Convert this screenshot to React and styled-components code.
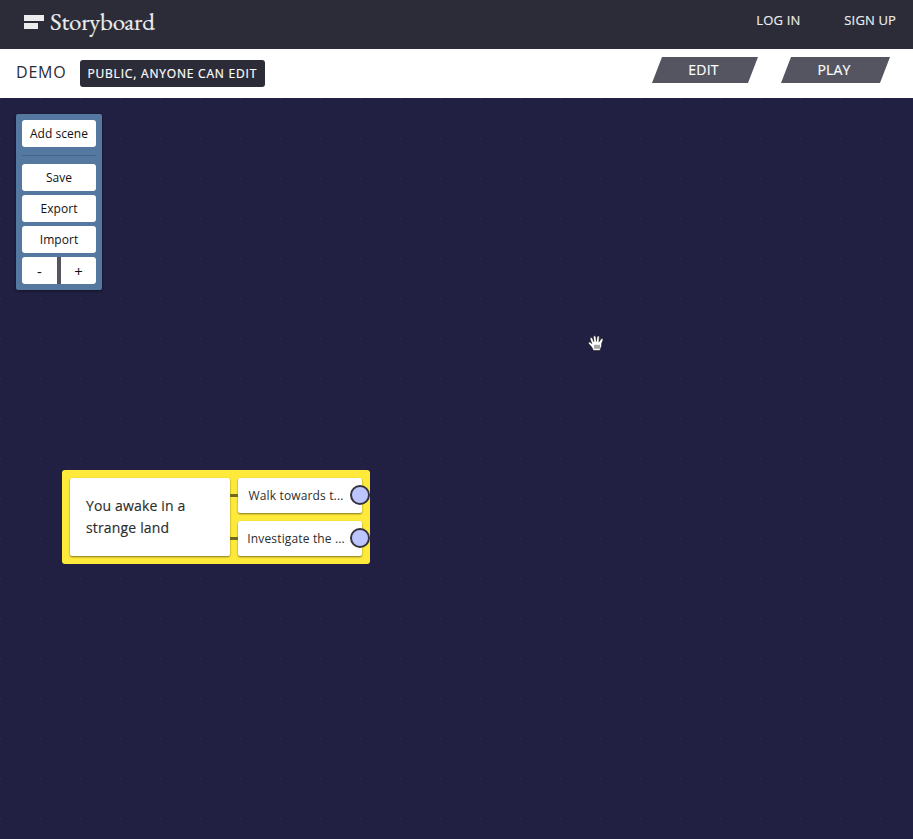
import React from "react";
import styled, { createGlobalStyle } from "styled-components";

const GlobalStyle = createGlobalStyle`
  * { box-sizing: border-box; }
  body { margin: 0; font-family: "Open Sans", "Noto Sans", sans-serif; background: #222042; }
  button { font-family: inherit; border: 0; padding: 0; margin: 0; }
`;

const Page = styled.div`
  display: flex;
  flex-direction: column;
  height: 839px;
  overflow: hidden;
`;

const TopBar = styled.header`
  display: flex;
  justify-content: space-between;
  height: 49px;
  padding: 0 17px 0 24px;
  background: #2b2c38;
  color: #ececec;
`;

const Brand = styled.a`
  display: flex;
  align-items: flex-start;
  gap: 6px;
`;

const BrandMark = styled.svg`
  display: block;
  margin-top: 15px;
`;

const BrandName = styled.span`
  margin-top: 7px;
  font: 25px/28px "EB Garamond", "Liberation Serif", serif;
  letter-spacing: -0.22px;
  -webkit-text-stroke: 0.15px currentColor;
`;

const AccountNav = styled.nav`
  display: flex;
  gap: 44px;
`;

const NavLink = styled.a`
  margin-top: 10px;
  font-size: 13px;
  line-height: 20px;
  letter-spacing: 0.14px;
  -webkit-text-stroke: 0.15px currentColor;
  white-space: nowrap;
`;

const StoryBar = styled.div`
  display: flex;
  height: 49px;
  padding: 0 23px 0 16px;
  background: #fff;
`;

const StoryTitle = styled.h1`
  width: 64px;
  margin: 12px 0 0;
  font-size: 16px;
  line-height: 22px;
  font-weight: 400;
  letter-spacing: 0.8px;
  color: #2b2c38;
`;

const AccessBadge = styled.span`
  width: 185px;
  height: 27px;
  margin-top: 11px;
  padding-left: 7.5px;
  border-radius: 3px;
  background: #2b2c38;
  color: #fff;
  font-size: 12px;
  line-height: 27px;
  letter-spacing: 0.8px;
  -webkit-text-stroke: 0.2px currentColor;
  white-space: nowrap;
`;

const ModeTabs = styled.div`
  display: flex;
  gap: 23px;
  margin: 8px 0 0 auto;
`;

const ModeTab = styled.button`
  width: ${(p) => p.$width}px;
  height: 26px;
  padding-right: 3px;
  background: #555561;
  clip-path: polygon(10px 0, 100% 0, calc(100% - 10px) 100%, 0 100%);
  color: #fff;
  font-size: 14px;
  line-height: 26px;
  letter-spacing: 0.2px;
  -webkit-text-stroke: 0.15px currentColor;
`;

const Canvas = styled.main`
  position: relative;
  flex: 1;
  background-color: #222042;
  background-image: radial-gradient(circle at 0.5px 0.5px, #33334f 0.8px, transparent 1px);
  background-size: 40px 40px;
`;

const ToolPanel = styled.aside`
  display: flex;
  flex-direction: column;
  gap: 4px;
  position: absolute;
  left: 16px;
  top: 16px;
  width: 86px;
  height: 176px;
  padding: 6px;
  border-radius: 2px;
  background: #5578a1;
  box-shadow: 0 1px 3px rgba(0, 0, 0, 0.5);
`;

const ToolButton = styled.button`
  flex: 0 0 27px;
  border-radius: 3px;
  background: #fff;
  color: #111;
  font-size: 12px;
  line-height: 27px;
  letter-spacing: 0.05px;
  white-space: nowrap;
`;

const Divider = styled.div`
  flex: 0 0 1px;
  margin: 4px 0;
  background: #456489;
`;

const ZoomGroup = styled.div`
  display: grid;
  grid-template-columns: 35px 35px;
  gap: 4px;
  height: 27px;
  border-radius: 3px;
  background: #555561;
  overflow: hidden;
`;

const ZoomButton = styled.button`
  background: #fff;
  color: #111;
  font-size: 15px;
  line-height: 28px;
`;

const SceneNode = styled.section`
  display: flex;
  gap: 8px;
  position: absolute;
  left: 62px;
  top: 372px;
  width: 308px;
  height: 94px;
  padding: 8px;
  border-radius: 3px;
  background: #ffea3b;
`;

const SceneText = styled.div`
  width: 160px;
  padding: 17px 16px;
  border-radius: 2px;
  background: #fff;
  box-shadow: 0 1px 2px rgba(0, 0, 0, 0.5);
  color: #2d2d2d;
  font-size: 14px;
  line-height: 22px;
  letter-spacing: 0.16px;
  -webkit-text-stroke: 0.15px currentColor;
`;

const ChoiceList = styled.div`
  display: flex;
  flex-direction: column;
  gap: 8px;
`;

const Choice = styled.div`
  position: relative;
  width: 124px;
  height: 35px;
  padding-left: ${(p) => p.$inset}px;
  border-radius: 2px;
  background: #fff;
  box-shadow: 0 1px 2px rgba(0, 0, 0, 0.5);
  color: #2d2d2d;
  font-size: 12px;
  line-height: 35px;
  letter-spacing: 0.15px;
  white-space: nowrap;

  &::before {
    content: "";
    position: absolute;
    left: -8px;
    top: 16px;
    width: 8px;
    height: 3px;
    background: #6f681d;
  }
`;

const Port = styled.span`
  position: absolute;
  right: -8px;
  top: 7px;
  width: 20px;
  height: 20px;
  border: 2px solid #33333f;
  border-radius: 50%;
  background: #bdc5ff;
`;

const HandCursor = styled.svg`
  position: absolute;
  left: 588px;
  top: 237px;
`;

const choices = [
  { label: "Walk towards t...", inset: 10.5 },
  { label: "Investigate the ...", inset: 9.3 },
];

export default function App() {
  return (
    <Page>
      <GlobalStyle />
      <TopBar>
        <Brand>
          <BrandMark width="20" height="14" fill="#ececec">
            <rect width="20" height="6" />
            <rect y="8" width="14" height="6" />
          </BrandMark>
          <BrandName>Storyboard</BrandName>
        </Brand>
        <AccountNav>
          <NavLink>LOG IN</NavLink>
          <NavLink>SIGN UP</NavLink>
        </AccountNav>
      </TopBar>
      <StoryBar>
        <StoryTitle>DEMO</StoryTitle>
        <AccessBadge>PUBLIC, ANYONE CAN EDIT</AccessBadge>
        <ModeTabs>
          <ModeTab $width={106}>EDIT</ModeTab>
          <ModeTab $width={109}>PLAY</ModeTab>
        </ModeTabs>
      </StoryBar>
      <Canvas>
        <ToolPanel>
          <ToolButton>Add scene</ToolButton>
          <Divider />
          <ToolButton>Save</ToolButton>
          <ToolButton>Export</ToolButton>
          <ToolButton>Import</ToolButton>
          <ZoomGroup>
            <ZoomButton>-</ZoomButton>
            <ZoomButton>+</ZoomButton>
          </ZoomGroup>
        </ToolPanel>
        <SceneNode>
          <SceneText>You awake in a strange land</SceneText>
          <ChoiceList>
            {choices.map(({ label, inset }) => (
              <Choice key={label} $inset={inset}>
                {label}
                <Port />
              </Choice>
            ))}
          </ChoiceList>
        </SceneNode>
        <HandCursor width="17" height="17" viewBox="0 0 17 17">
          <path
            d="M5.4 15.6 3.6 12 .7 8.8C0 7.6 1.1 6.5 2.4 7.3L3.8 8.6 2.1 4.2C1.7 2.6 3.9 1.9 4.5 3.5L5.8 6.6 5.3 2.1C5.3.4 7.7.4 7.9 2.1L8.4 6.3 9 2C9.2.4 11.4.6 11.3 2.3L11 6.8 12.8 4.2C13.6 2.9 15.5 3.7 15 5.2L13.7 8.5C13.8 11 13.2 12.5 12.5 13.5L12.1 15.6Z"
            fill="#fff"
            stroke="#111"
            strokeWidth="0.6"
          />
          <path d="M7 9.8v4M9 9.8v4M11 9.8v4" stroke="#222" strokeWidth="0.8" />
        </HandCursor>
      </Canvas>
    </Page>
  );
}
